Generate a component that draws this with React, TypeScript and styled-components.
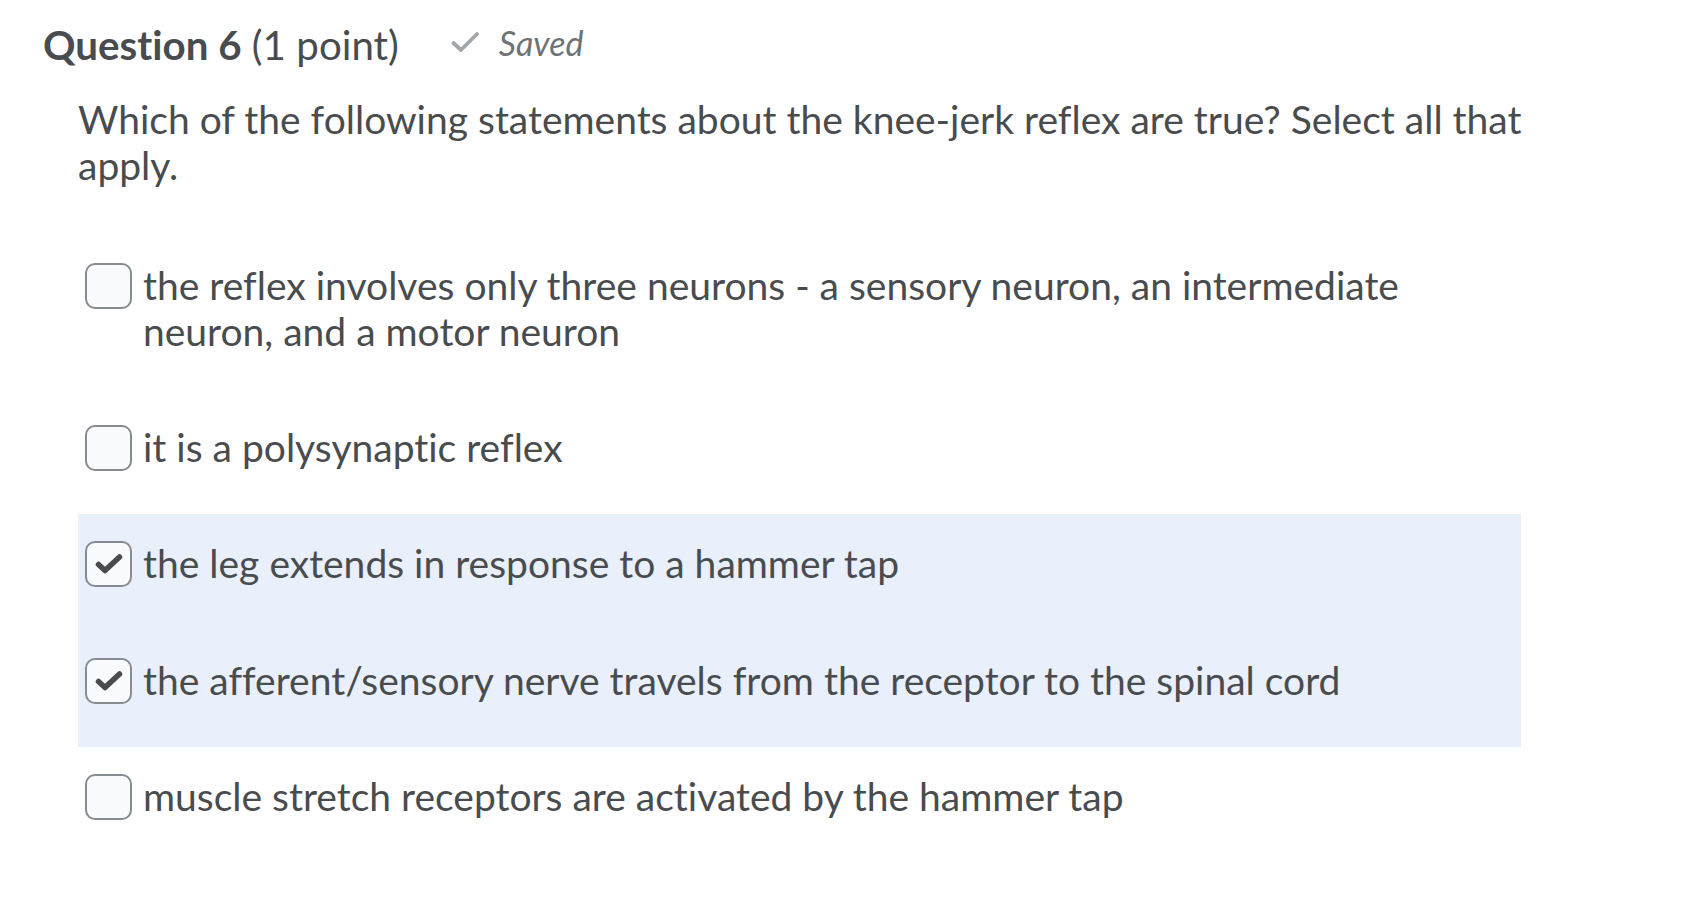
import styled, { createGlobalStyle } from 'styled-components'

const GlobalStyle = createGlobalStyle`
  body {
    margin: 0;
    background: #ffffff;
    font-family: Lato, "Open Sans", sans-serif;
    color: #494c4e;
    font-variant-ligatures: none;
  }
`

const Page = styled.div`
  padding: 20px 0 40px 43px;
`

const Header = styled.div`
  display: flex;
  align-items: center;
  height: 50px;
`

const Title = styled.h2`
  margin: 0;
  font-size: 40.3px;
  line-height: 1.2;
  font-weight: 400;
  color: #494c4e;
  white-space: nowrap;
`

const TitleStrong = styled.span`
  font-weight: 700;
`

const SavedStatus = styled.div`
  display: flex;
  align-items: center;
  gap: 19px;
  margin-left: 52px;
  margin-top: -6px;
  font-size: 34px;
  font-style: italic;
  color: #6e7376;
`

const Body = styled.div`
  margin-left: 35px;
  width: 1443px;
`

const Prompt = styled.p`
  margin: 27px 0 0;
  width: 1470px;
  font-size: 39px;
  line-height: 45.6px;
`

const OptionList = styled.ul`
  list-style: none;
  margin: 48px 0 0;
  padding: 0;
`

const OptionRow = styled.li<{ selected: boolean }>`
  display: flex;
  align-items: flex-start;
  gap: 11px;
  padding: 27px 0 43.4px 7px;
  background: ${(p) => (p.selected ? '#e9f0fb' : 'transparent')};
`

const Box = styled.span`
  flex: 0 0 auto;
  box-sizing: border-box;
  width: 47px;
  height: 46px;
  border: 2px solid #878c90;
  border-radius: 10px;
  background: #f9fbff;
  display: flex;
  align-items: center;
  justify-content: center;
`

const OptionText = styled.span`
  font-size: 39px;
  line-height: 45.6px;
  color: #494c4e;
`

const options = [
  {
    text: 'the reflex involves only three neurons - a sensory neuron, an intermediate neuron, and a motor neuron',
    checked: false,
  },
  { text: 'it is a polysynaptic reflex', checked: false },
  { text: 'the leg extends in response to a hammer tap', checked: true },
  {
    text: 'the afferent/sensory nerve travels from the receptor to the spinal cord',
    checked: true,
  },
  { text: 'muscle stretch receptors are activated by the hammer tap', checked: false },
]

const CheckMark = () => (
  <svg width="30" height="22" viewBox="0 0 30 22">
    <path
      d="M4.5 11.5 L11 17.5 L25.5 4"
      fill="none"
      stroke="#494c4e"
      strokeWidth="5.5"
      strokeLinecap="round"
      strokeLinejoin="round"
    />
  </svg>
)

const SavedCheck = () => (
  <svg width="29" height="22" viewBox="0 0 29 22">
    <path
      d="M2.5 12 L10 19 L26 3"
      fill="none"
      stroke="#a2a7ab"
      strokeWidth="3.8"
      strokeLinecap="round"
      strokeLinejoin="round"
    />
  </svg>
)

export default function App() {
  return (
    <Page>
      <GlobalStyle />
      <Header>
        <Title>
          <TitleStrong>Question 6</TitleStrong> (1 point)
        </Title>
        <SavedStatus>
          <SavedCheck />
          <span>Saved</span>
        </SavedStatus>
      </Header>
      <Body>
        <Prompt>
          Which of the following statements about the knee-jerk reflex are true? Select all that apply.
        </Prompt>
        <OptionList>
          {options.map((item, index) => (
            <OptionRow key={index} selected={item.checked}>
              <Box>{item.checked && <CheckMark />}</Box>
              <OptionText>{item.text}</OptionText>
            </OptionRow>
          ))}
        </OptionList>
      </Body>
    </Page>
  )
}
